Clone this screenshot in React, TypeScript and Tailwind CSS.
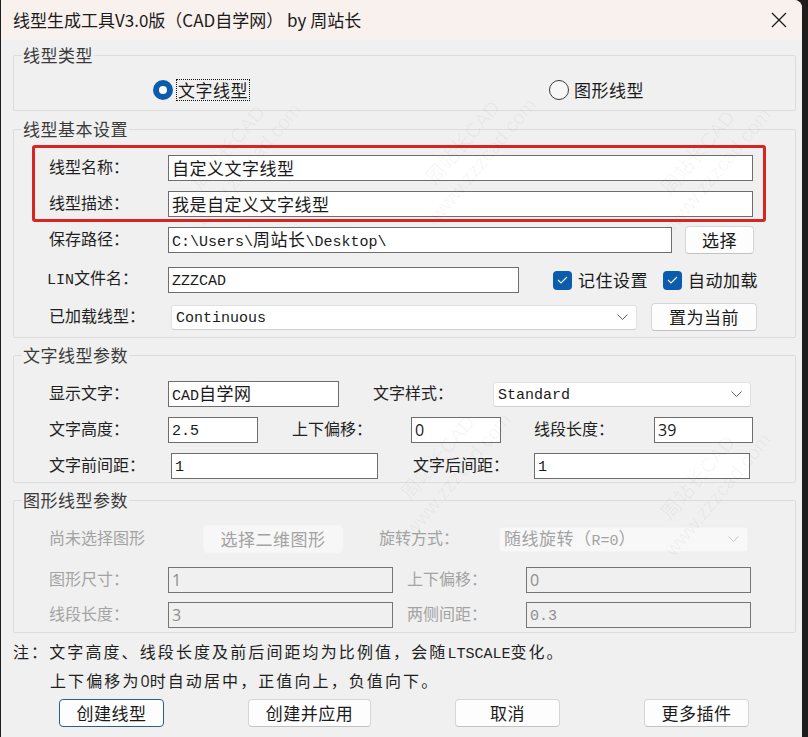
import type { ReactNode } from "react";

const cjk = "font-['Noto_Sans_CJK_SC',sans-serif]";
const mono = "font-['Liberation_Mono','Noto_Sans_CJK_SC',monospace] text-[15px]";

// splits a string into ascii / cjk runs so each gets its own font, kept on one baseline
function Mixed({ text, ascii = mono, wide = "text-[17px] tracking-[0.5px]" }: { text: string; ascii?: string; wide?: string }) {
  return (
    <span className="whitespace-nowrap">
      {text
        .split(/([\x00-\x7f]+)/)
        .filter(Boolean)
        .map((part, i) =>
          /^[\x00-\x7f]+$/.test(part) ? (
            <span key={i} className={ascii}>
              {part}
            </span>
          ) : (
            <span key={i} className={`${cjk} ${wide}`}>
              {part}
            </span>
          )
        )}
    </span>
  );
}

function Label({ text, className = "", disabled = false }: { text: string; className?: string; disabled?: boolean }) {
  return (
    <div className={`shrink-0 whitespace-nowrap -mt-[3px] ${disabled ? "text-[#a3a3a3]" : "text-[#1f1f1f]"} ${className}`}>
      <Mixed text={text} wide="text-[16px]" />
    </div>
  );
}

function Field({ value, className = "", disabled = false, sans = false }: { value: string; className?: string; disabled?: boolean; sans?: boolean }) {
  return (
    <div
      className={`shrink-0 h-[26px] border flex items-center pl-[3px] overflow-hidden whitespace-nowrap ${
        disabled ? "border-[#757575] bg-[#f0f0f0] text-[#8e8e8e]" : "border-[#6e6e6e] bg-white text-[#1a1a1a]"
      } ${className}`}
    >
      <Mixed text={value} ascii={sans ? "font-['Open_Sans',sans-serif] text-[16px]" : mono} />
    </div>
  );
}

function Chevron({ color }: { color: string }) {
  return (
    <svg width="11" height="6" viewBox="0 0 11 6" fill="none" className="shrink-0">
      <polyline points="0.5,0.5 5.5,5.5 10.5,0.5" stroke={color} strokeWidth="1" />
    </svg>
  );
}

function Combo({ value, className = "", disabled = false }: { value: string; className?: string; disabled?: boolean }) {
  return (
    <div
      className={`shrink-0 h-[25px] rounded-[3px] border flex items-center justify-between pl-[4px] pr-[8px] ${
        disabled ? "border-[#f3f3f3] bg-[#f8f8f8] text-[#a3a3a3]" : "border-[#e2e2e2] border-b-[#cfcfcf] bg-white text-[#1a1a1a]"
      } ${className}`}
    >
      <Mixed text={value} />
      <Chevron color={disabled ? "#c4c4c4" : "#5f5f5f"} />
    </div>
  );
}

function Button({ text, className = "", focused = false, disabled = false }: { text: string; className?: string; focused?: boolean; disabled?: boolean }) {
  return (
    <div
      className={`shrink-0 h-[28px] rounded-[4px] border flex items-center justify-center ${cjk} text-[17px] tracking-[0.5px] ${
        disabled
          ? "border-[#f5f5f5] bg-[#f7f7f7] text-[#a3a3a3]"
          : focused
          ? "border-[#2d5f86] bg-[#fdfdfd] text-[#1a1a1a]"
          : "border-[#d6d6d6] border-b-[#c2c2c2] bg-[#fdfdfd] text-[#1a1a1a]"
      } ${className}`}
    >
      {text}
    </div>
  );
}

function Check({ text }: { text: string }) {
  return (
    <div className="flex items-center gap-[6px]">
      <div className="w-[19px] h-[19px] rounded-[4px] bg-[#0b5cad] flex items-center justify-center">
        <svg width="11" height="8" viewBox="0 0 11 8" fill="none">
          <polyline points="1,4 4,7 10,1" stroke="white" strokeWidth="1.1" />
        </svg>
      </div>
      <span className={`${cjk} text-[17px] tracking-[0.5px] text-[#1a1a1a]`}>{text}</span>
    </div>
  );
}

function Group({ title, children, className = "" }: { title: string; children: ReactNode; className?: string }) {
  return (
    <fieldset className={`w-[783px] border border-[#dcdcdc] rounded-[2px] ${className}`}>
      <legend className={`ml-[8px] px-[1px] h-[22px] leading-[22px] ${cjk} text-[17px] tracking-[0.5px] text-[#3a3a3a]`}>{title}</legend>
      {children}
    </fieldset>
  );
}

const marks = [
  { x: 160, y: 130 },
  { x: 395, y: 125 },
  { x: 630, y: 135 },
  { x: 370, y: 440 },
  { x: 630, y: 460 },
];

export default function App() {
  return (
    <div className="w-[808px] h-[737px] bg-[#1d1d1d] overflow-hidden">
      <div className="relative ml-[1px] w-[801px] h-[745px] bg-[#f0f0f0] rounded-tr-[8px] rounded-b-[8px] overflow-hidden">
        {/* title bar */}
        <div className="h-[40px] bg-[#f9f1ee] flex items-center justify-between pl-[12px] pr-[15px]">
          <span className={`${cjk} text-[17px] text-[#1a1a1a] whitespace-nowrap`}>线型生成工具V3.0版（CAD自学网） by 周站长</span>
          <svg width="16" height="16" viewBox="0 0 16 16" fill="none">
            <path d="M1 1 L15 15 M15 1 L1 15" stroke="#1a1a1a" strokeWidth="1.3" />
          </svg>
        </div>

        <div className="pl-[12px] pt-[4px]">
          {/* 线型类型 */}
          <Group title="线型类型">
            <div className="flex items-center h-[22px] mt-[13px] mb-[9px]">
              <div className="ml-[139px] w-[20px] h-[20px] rounded-full bg-[#0b5cad] flex items-center justify-center">
                <div className="w-[8px] h-[8px] rounded-full bg-white" />
              </div>
              <span className={`ml-[3px] px-[1px] border border-dotted border-[#111] ${cjk} text-[17px] tracking-[0.5px] text-[#1a1a1a] leading-[20px]`}>
                文字线型
              </span>
              <div className="ml-[299px] w-[20px] h-[20px] rounded-full border border-[#3a3a3a] bg-[#f7f7f7]" />
              <span className={`ml-[5px] ${cjk} text-[17px] tracking-[0.5px] text-[#1a1a1a]`}>图形线型</span>
            </div>
          </Group>

          {/* 线型基本设置 */}
          <Group title="线型基本设置" className="mt-[7px]">
            <div className="px-[18px] pt-[5px] pb-[5px]">
              <div className="w-[734px] border-[3px] border-[#d72622] rounded-[3px] pl-[14px] pt-[7px] pb-[2px] flex flex-col gap-[10px]">
                <div className="flex items-center">
                  <Label text="线型名称：" className="w-[119px]" />
                  <Field value="自定义文字线型" className="w-[585px]" />
                </div>
                <div className="flex items-center">
                  <Label text="线型描述：" className="w-[119px]" />
                  <Field value="我是自定义文字线型" className="w-[585px]" />
                </div>
              </div>

              <div className="flex items-center h-[30px] mt-[3px] pl-[17px]">
                <Label text="保存路径：" className="w-[119px]" />
                <Field value="C:\Users\周站长\Desktop\" className="w-[504px]" />
                <Button text="选择" className="ml-[13px] w-[69px]" />
              </div>

              <div className="flex items-center h-[30px] mt-[10px] pl-[15px]">
                <Label text="LIN文件名：" className="w-[121px]" />
                <Field value="ZZZCAD" className="w-[351px]" />
                <div className="ml-[34px]">
                  <Check text="记住设置" />
                </div>
                <div className="ml-[15px]">
                  <Check text="自动加载" />
                </div>
              </div>

              <div className="flex items-center h-[30px] mt-[7px] pl-[17px]">
                <Label text="已加载线型：" className="w-[122px]" />
                <Combo value="Continuous" className="w-[466px]" />
                <Button text="置为当前" className="ml-[14px] w-[106px]" />
              </div>
            </div>
          </Group>

          {/* 文字线型参数 */}
          <Group title="文字线型参数" className="mt-[6px]">
            <div className="pl-[35px] pt-[15px] pb-[3px] flex flex-col gap-[10px]">
              <div className="flex items-center h-[26px]">
                <Label text="显示文字：" className="w-[119px]" />
                <Field value="CAD自学网" className="w-[171px]" />
                <Label text="文字样式：" className="ml-[34px] w-[120px]" />
                <Combo value="Standard" className="w-[258px]" />
              </div>
              <div className="flex items-center h-[26px]">
                <Label text="文字高度：" className="w-[119px]" />
                <Field value="2.5" className="w-[90px]" />
                <Label text="上下偏移：" className="ml-[34px] w-[119px]" />
                <Field value="0" sans className="w-[90px]" />
                <Label text="线段长度：" className="ml-[33px] w-[120px]" />
                <Field value="39" sans className="w-[99px]" />
              </div>
              <div className="flex items-center h-[26px]">
                <Label text="文字前间距：" className="w-[122px]" />
                <Field value="1" className="w-[207px]" />
                <Label text="文字后间距：" className="ml-[35px] w-[121px]" />
                <Field value="1" className="w-[216px]" />
              </div>
            </div>
          </Group>

          {/* 图形线型参数 (disabled until a shape is picked) */}
          <Group title="图形线型参数" className="mt-[6px]">
            <div className="pl-[35px] pt-[14px] pb-[4px]">
              <div className="flex items-center h-[28px]">
                <Label text="尚未选择图形" disabled className="w-[154px]" />
                <Button text="选择二维图形" disabled className="w-[140px]" />
                <Label text="旋转方式：" disabled className="ml-[36px] w-[120px]" />
                <Combo value="随线旋转（R=0）" disabled className="w-[249px] h-[24px]" />
              </div>
              <div className="flex items-center h-[26px] mt-[14px]">
                <Label text="图形尺寸：" disabled className="w-[119px]" />
                <Field value="1" sans disabled className="w-[225px]" />
                <Label text="上下偏移：" disabled className="ml-[14px] w-[119px]" />
                <Field value="0" sans disabled className="w-[225px]" />
              </div>
              <div className="flex items-center h-[26px] mt-[9px]">
                <Label text="线段长度：" disabled className="w-[119px]" />
                <Field value="3" sans disabled className="w-[225px]" />
                <Label text="两侧间距：" disabled className="ml-[14px] w-[119px]" />
                <Field value="0.3" disabled className="w-[225px]" />
              </div>
            </div>
          </Group>

          {/* note */}
          <div className="mt-[8px] text-[#1f1f1f]">
            <div className="h-[24px] flex items-center">
              <Mixed text="注：文字高度、线段长度及前后间距均为比例值，会随LTSCALE变化。" wide="text-[16px] tracking-[2.1px]" />
            </div>
            <div className="h-[24px] flex items-center mt-[3px] pl-[37px]">
              <Mixed text="上下偏移为0时自动居中，正值向上，负值向下。" ascii="font-['Open_Sans',sans-serif] text-[16px]" wide="text-[16px] tracking-[2.1px]" />
            </div>
          </div>

          <div className="flex items-center mt-[7px] pl-[46px]">
            <Button text="创建线型" focused className="w-[105px]" />
            <Button text="创建并应用" className="ml-[84px] w-[123px]" />
            <Button text="取消" className="ml-[84px] w-[105px]" />
            <Button text="更多插件" className="ml-[84px] w-[105px]" />
          </div>
        </div>

        {/* site watermark */}
        {marks.map((m, i) => (
          <div
            key={i}
            className="absolute pointer-events-none -rotate-[50deg] flex flex-col items-center text-black/[0.045] font-['Liberation_Sans','Noto_Sans_CJK_SC',sans-serif] text-[20px] leading-[26px]"
            style={{ left: m.x, top: m.y }}
          >
            <span>周站长CAD</span>
            <span>www.zzzcad.com</span>
          </div>
        ))}
      </div>
    </div>
  );
}
